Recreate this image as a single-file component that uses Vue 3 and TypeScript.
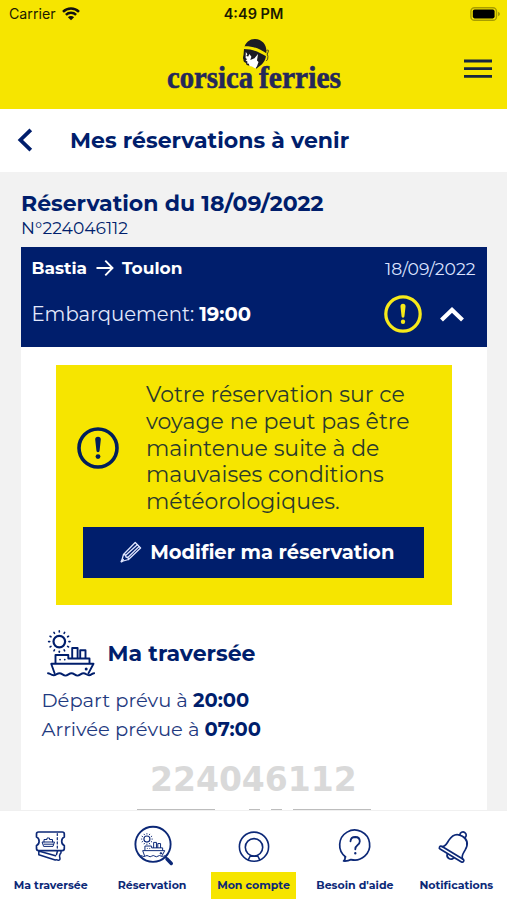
<script setup lang="ts">
interface Tab {
  id: string
  label: string
}

const tabs: Tab[] = [
  { id: 'ticket', label: 'Ma traversée' },
  { id: 'search', label: 'Réservation' },
  { id: 'account', label: 'Mon compte' },
  { id: 'help', label: "Besoin d'aide" },
  { id: 'bell', label: 'Notifications' },
]
const activeTab = 'account'

const booking = {
  number: '224046112',
  date: '18/09/2022',
  from: 'Bastia',
  to: 'Toulon',
  boarding: '19:00',
  departure: '20:00',
  arrival: '07:00',
}

const rays = Array.from({ length: 12 }, (_, i) => i * 30)
</script>

<template>
  <div class="screen">
    <svg class="defs" aria-hidden="true">
      <symbol id="ship" viewBox="0 0 48 48">
        <g fill="none" stroke="currentColor" stroke-width="1.9" stroke-linecap="round" stroke-linejoin="round">
          <circle cx="12.3" cy="12.6" r="5.8" stroke-width="2.2" />
          <path v-for="r in rays" :key="r" d="M12.3 3v-1.1" stroke-width="1.6" :transform="`rotate(${r} 12.3 12.6)`" />
          <path d="M8.5 34v-8h12.800v3.500h21.200V34" />
          <path d="M25.200 29V19h5.400v10M33.200 29v-7.800h5.300V29" />
          <path d="M7.600 44.200 4.200 34.800h42.300l-5.100 9.600" />
          <path d="M1 44.200c2 0 2.700 2 5.500 2s3.500-2 6-2 3.500 2.400 6 2.400 3.500-2.400 6-2.400 3.500 2.400 6 2.400 3.500-2.400 6-2.400 3 2 5.500 2 3-2 5.200-2" />
          <path d="M13 30.600h.1M17.700 30.600h.1" stroke-width="1.700" />
        </g>
        <circle cx="39.200" cy="40" r="1.500" fill="currentColor" />
      </symbol>
      <symbol id="warning" viewBox="0 0 42 42">
        <circle cx="21" cy="21" r="19" fill="none" stroke="currentColor" stroke-width="3.600" />
        <path d="M18.200 12.600a2.800 2.800 0 0 1 5.600 0L22.600 23.600a1.600 1.600 0 0 1-3.200 0z" fill="currentColor" />
        <circle cx="21" cy="29.600" r="2.400" fill="currentColor" />
      </symbol>
    </svg>

    <header class="top">
      <div class="status">
        <div class="carrier">
          <span>Carrier</span>
          <svg width="18" height="14" viewBox="0 0 18 14">
            <g fill="none" stroke="#111" stroke-width="2.500">
              <path d="M1 4.900a11.400 11.400 0 0 1 16 0" />
              <path d="M3.900 7.900a7.300 7.300 0 0 1 10.200 0" />
            </g>
            <path d="M9 13.300 5.900 10.200a4.400 4.400 0 0 1 6.200 0z" fill="#111" />
          </svg>
        </div>
        <span class="clock">4:49 PM</span>
        <svg class="battery" width="31" height="14" viewBox="0 0 31 14">
          <rect x=".9" y=".7" width="25.600" height="12.600" rx="3.600" fill="none" stroke="#a89d00" stroke-width="1.400" />
          <rect x="2.800" y="2.600" width="21.800" height="8.800" rx="1.800" fill="#000" />
          <path d="M28 4.700q2 .7 2 2.300t-2 2.300z" fill="#a89d00" />
        </svg>
      </div>
      <div class="brand">
        <svg class="logo" width="176" height="66" viewBox="0 0 176 66">
          <g transform="translate(-1 0)">
            <path d="M79 11C80 4 85 .8 90 .9c7 .2 11.500 5.500 11.400 12 0 5.500-1 9-3.400 12-2 2.800-4.500 3.500-6.500 5.800-1.500-2-3-2.600-5-2.700-3-.1-5.800-.8-5.500-3-1.300-.8-2.900-1.500-2.500-3.300-1-1.200-.3-3 0-4.600z" fill="#1b1b24" />
            <path d="M79.200 8.200c8.500-.3 15.500 2.500 22.500 7.200l-.6 2.800c-7.500-4.400-14-7.200-22.300-7.200z" fill="#f6e500" />
            <path d="M101.500 12.500q2.800-1.300 1.600 1.500-1.500 2-.2 4.500.3 3-1.600 4.500" fill="none" stroke="#3a381c" stroke-width=".9" />
            <path d="m80.800 14 1.600 2.300-1.200 1.800 2 .5 1.200-2.700 2 2.900-1.100 3.300 4.200-1.800 3.500-4.300-1 6.500 1.500 1.400-1.500 4.300-1.600 2.200-3.500-2-2.300-.4-.8-2.200-2.200-.5 1.200-1.300-2.200-1.700 1.600-1-1.600-1.300z" fill="#fff" />
          </g>
          <text class="wordmark" x="1" y="49.500" textLength="86" lengthAdjust="spacingAndGlyphs">corsica</text>
          <text class="wordmark" x="93" y="49.500" textLength="82" lengthAdjust="spacingAndGlyphs">ferries</text>
        </svg>
        <svg class="menu" width="28" height="20" viewBox="0 0 28 20">
          <path d="M0 2h28M0 9.700h28M0 17.400h28" stroke="#17273f" stroke-width="2.800" />
        </svg>
      </div>
    </header>

    <div class="subheader">
      <svg width="16" height="24" viewBox="0 0 16 24">
        <path d="M13.800 1.800 3.400 12l10.400 10.200" fill="none" stroke="#001e6c" stroke-width="3.800" />
      </svg>
      <h1>Mes réservations à venir</h1>
    </div>

    <main class="content">
      <h2>Réservation du {{ booking.date }}</h2>
      <p class="ref">N°{{ booking.number }}</p>

      <section class="card">
        <div class="card-head">
          <div class="row route-row">
            <div class="route">
              <b>{{ booking.from }}</b>
              <svg width="18" height="18" viewBox="0 0 18 18">
                <path d="M.5 9h15.500M9.300 1.700 16.500 9l-7.200 7.300" fill="none" stroke="#fff" stroke-width="1.900" />
              </svg>
              <b>{{ booking.to }}</b>
            </div>
            <span class="date">{{ booking.date }}</span>
          </div>
          <div class="row board-row">
            <span class="board">Embarquement: <b>{{ booking.boarding }}</b></span>
            <div class="actions">
              <svg class="warn" width="38" height="38"><use href="#warning" /></svg>
              <svg width="24" height="15" viewBox="0 0 24 15">
                <path d="M1.500 13 12 3l10.500 10" fill="none" stroke="#fff" stroke-width="4.200" />
              </svg>
            </div>
          </div>
        </div>

        <div class="alert">
          <div class="alert-body">
            <svg class="alert-icon" width="42" height="42"><use href="#warning" /></svg>
            <p>Votre réservation sur ce<br />voyage ne peut pas être<br />maintenue suite à de<br />mauvaises conditions<br />météorologiques.</p>
          </div>
          <button type="button" class="modify">
            <svg width="22" height="22" viewBox="0 0 22 22">
              <g fill="none" stroke="#dfe5ff" stroke-width="1.300" stroke-linejoin="round" stroke-linecap="round">
                <path d="M1.500 20.500 3.500 13.500 15.200 1.500 20.600 7 8.500 18.500z" />
                <path d="M3.500 13.500 5.500 14l.5 2 2 .5.5 2M5.800 14.200 17.300 3.700M8 16.300 19 5.600" />
                <path d="M1.500 20.500 3 18.800" stroke-width="2" />
              </g>
            </svg>
            <span>Modifier ma réservation</span>
          </button>
        </div>

        <div class="crossing">
          <div class="crossing-title">
            <svg width="48" height="48"><use href="#ship" /></svg>
            <h3>Ma traversée</h3>
          </div>
          <p>Départ prévu à <b>{{ booking.departure }}</b></p>
          <p>Arrivée prévue à <b>{{ booking.arrival }}</b></p>
        </div>

        <div class="code-number">{{ booking.number }}</div>
        <div class="code-bars"><i class="wide" /><i class="narrow first" /><i class="narrow" /><i class="wide" /></div>
      </section>
    </main>

    <nav class="tabs">
      <a v-for="tab in tabs" :key="tab.id" class="tab" :class="{ active: tab.id === activeTab }">
        <svg width="44" height="44" viewBox="0 0 44 44" fill="none" stroke="currentColor" stroke-width="1.700" stroke-linejoin="round" stroke-linecap="round">
          <template v-if="tab.id === 'ticket'">
            <path d="M9.500 8h23.800q2 0 2 2v3q-2.600 1-2.600 4.300t2.600 4.300v3q0 2-2 2H9.500q-2 0-2-2v-3q2.600-1 2.600-4.300T7.500 13v-3q0-2 2-2z" />
            <path d="M28.300 9.500v16" stroke-width="1.200" stroke-dasharray="2 2.200" />
            <path d="M13.500 18h12l-1.500 4.400h-9zM15 18v-2.500h3V14h2.500v1.500h3V18M15 20.200h9.500" stroke-width="1" />
            <path d="M9.800 27v3.800l16.400 5.200q1.600-.6 2.800.2 1.800.4 2-1.600-.3-1.900-.5-2.800.5-2.200 1.500-3V27M10.500 27.300l16 4.500M28.500 27l-1 3.500" stroke-width="1.500" />
          </template>
          <template v-else-if="tab.id === 'search'">
            <circle cx="22" cy="20.300" r="17.600" stroke-width="1.900" />
            <path d="m34.500 33 1.500 1.500" />
            <path d="m36 35 4.300 4.500" stroke-width="3.400" />
            <use href="#ship" x="9.500" y="8" width="25" height="26" />
          </template>
          <template v-else-if="tab.id === 'account'">
            <circle cx="22" cy="22.700" r="14.600" stroke-width="1.600" />
            <circle cx="22" cy="23.300" r="8.700" stroke-width="1.600" />
            <path d="m18.500 31.500-2 3.800M25.500 31.500l2 3.800M18 32.300h8" stroke-width="1.500" />
          </template>
          <template v-else-if="tab.id === 'help'">
            <path d="M12.600 33A15 15 0 1 1 18 35.600Q15 37.300 10.600 37 12.600 35.600 12 32.400" />
            <path d="M17.500 17.300q.2-4.300 4.800-4.300 4.500.1 4.500 4.300 0 2.300-2.400 4-2.100 1.500-2.100 4" stroke-width="1.800" />
            <path d="M22.300 29.200v.2" stroke-width="2.300" />
          </template>
          <template v-else>
            <g transform="translate(-1.400 .5) rotate(31 22 22)">
              <path d="M10.500 29.200Q13 27.500 13 22.500V20q.3-10.300 9.500-10.300T32 20v2.500q0 5 2.500 6.700" />
              <path d="M10 29h25q1.500 0 1.500 1.600T35 32.200H10q-1.500 0-1.500-1.600T10 29z" />
              <path d="M19.600 9.800a3.200 3.200 0 1 1 5.800 0M18.700 32.700a3.900 3.900 0 0 0 7.600 0" />
            </g>
          </template>
        </svg>
        <span>{{ tab.label }}</span>
      </a>
    </nav>
  </div>
</template>

<style>
body {
  margin: 0;
  background: #f2f2f2;
}
</style>

<style scoped>
.screen {
  width: 507px;
  height: 900px;
  display: flex;
  flex-direction: column;
  overflow: hidden;
  background: #f2f2f2;
  color: #001e6c;
  font-family: Montserrat, Inter, sans-serif;
}
.defs {
  position: absolute;
  width: 0;
  height: 0;
}
svg {
  display: block;
  flex: none;
}
h1, h2, h3, p {
  margin: 0;
}
b {
  font-weight: 700;
}
.top {
  flex: none;
  height: 108.500px;
  background: #f6e500;
}
.status {
  display: grid;
  grid-template-columns: 1fr auto 1fr;
  align-items: center;
  height: 27px;
  padding: 0 6px 0 9px;
  font: 400 14.200px/27px Inter, sans-serif;
  color: #1c1a00;
}
.carrier {
  display: flex;
  align-items: center;
  gap: 6px;
}
.clock {
  font-weight: 600;
  font-size: 14.500px;
  margin-right: 3px;
}
.battery {
  justify-self: end;
}
.brand {
  display: grid;
  grid-template-columns: 1fr auto 1fr;
  align-items: start;
  padding: 11px 15px 0;
}
.logo {
  grid-column: 2;
  overflow: visible;
}
.menu {
  justify-self: end;
  margin-top: 20.500px;
}
.wordmark {
  font: 700 32.500px "Liberation Serif", serif;
  fill: #24285a;
  stroke: #24285a;
  stroke-width: 0.600px;
}
.subheader {
  flex: none;
  display: flex;
  align-items: center;
  gap: 37px;
  height: 63.500px;
  padding-left: 17px;
  background: #fff;
}
h1, h2, h3 {
  font-size: 22px;
  font-weight: 700;
  line-height: 27px;
}
.content {
  flex: 1;
  min-height: 0;
  padding: 18px 20.500px 0 21px;
  overflow: hidden;
}
.ref {
  font-size: 17.100px;
  line-height: 21px;
}
.card {
  margin-top: 9px;
  height: 563px;
  background: #fff;
}
.card-head {
  height: 100px;
  box-sizing: border-box;
  padding: 10px 11px 0 10.500px;
  background: #001e6c;
  color: #fff;
}
.row {
  display: flex;
  align-items: center;
  justify-content: space-between;
}
.route-row {
  height: 22px;
  font-size: 17px;
}
.route {
  display: flex;
  align-items: center;
  gap: 8.500px;
}
.date {
  font-size: 17.200px;
  color: #dbe2ff;
}
.board-row {
  height: 38px;
  margin-top: 16px;
  font-size: 19.600px;
}
.board {
  color: #e3e8fb;
}
.board b {
  color: #fff;
}
.actions {
  display: flex;
  align-items: center;
  gap: 18px;
  padding-right: 12px;
}
.warn {
  color: #f6e91a;
}
.alert {
  display: flex;
  flex-direction: column;
  align-items: center;
  width: 395.500px;
  height: 240px;
  margin: 18px 0 0 35px;
  padding-top: 17px;
  box-sizing: border-box;
  background: #f6e500;
}
.alert-body {
  align-self: stretch;
  display: flex;
  align-items: center;
  gap: 27px;
  padding-left: 21px;
  font-size: 22px;
  line-height: 26.800px;
  color: #2a3a2c;
}
.alert-icon {
  color: #001e5c;
  margin-bottom: 1px;
}
.modify {
  display: flex;
  align-items: center;
  justify-content: center;
  gap: 8px;
  width: 341px;
  height: 51px;
  margin-top: 11px;
  padding: 0 0 0 7px;
  border: 0;
  background: #001e6c;
  color: #fff;
  font: 700 19.500px Montserrat, Inter, sans-serif;
}
.crossing {
  padding: 24px 0 0 20.500px;
  font-size: 19.500px;
  line-height: 28.500px;
}
.crossing p {
  color: #1f3a80;
}
.crossing b {
  color: #001e6c;
}
.crossing-title {
  display: flex;
  align-items: center;
  gap: 13px;
  padding-left: 5px;
  margin-bottom: 9px;
}
.code-number {
  margin: 17px 0 0 129px;
  font: 700 33px/40px "DejaVu Sans", sans-serif;
  color: #d9d9d9;
}
.code-bars {
  display: flex;
  gap: 11px;
  margin: 9px 0 0 115.500px;
}
.code-bars i {
  height: 10px;
  background: #bdbdbd;
}
.wide {
  width: 78px;
}
.narrow {
  width: 11px;
}
.first {
  margin-left: 23px;
}
.tabs {
  flex: none;
  display: grid;
  grid-template-columns: repeat(5, 1fr);
  height: 90px;
  box-sizing: border-box;
  border-top: 1px solid #f0f0f0;
  background: #fff;
}
.tab {
  display: flex;
  flex-direction: column;
  align-items: center;
  padding-top: 13px;
  color: #0c2877;
}
.tab svg {
  margin-left: 1px;
}
.tab span {
  margin-top: 4px;
  padding: 0 6.500px;
  font-size: 11px;
  font-weight: 700;
  line-height: 27px;
  white-space: nowrap;
}
.active span {
  background: #f6e500;
}
</style>
